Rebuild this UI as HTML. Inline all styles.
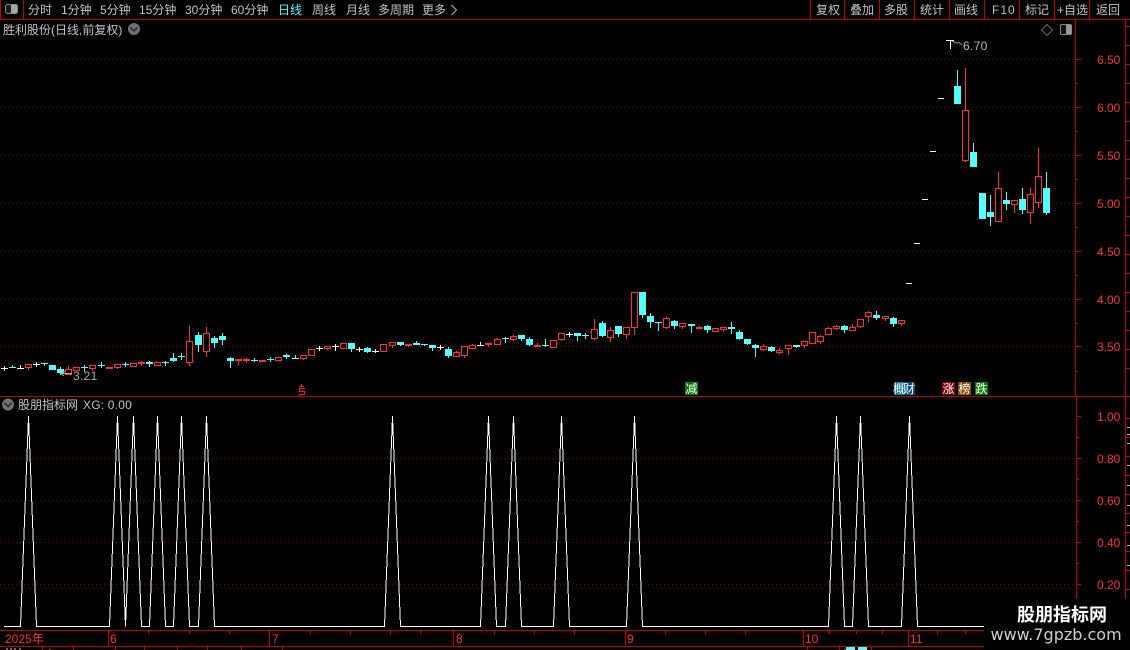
<!DOCTYPE html>
<html><head><meta charset="utf-8">
<style>
html,body{margin:0;padding:0;background:#000;width:1130px;height:650px;overflow:hidden}
svg{display:block}
text{font-family:"WenQuanYi Zen Hei","Liberation Sans","Noto Sans CJK SC",sans-serif;font-size:12px;fill:#c4c4c4}
.n{font-family:"Liberation Sans","WenQuanYi Zen Hei",sans-serif}
.r{fill:#ff3232;font-family:"Liberation Sans",sans-serif}
</style></head><body>
<svg width="1130" height="650" viewBox="0 0 1130 650" xmlns="http://www.w3.org/2000/svg">
<rect width="1130" height="650" fill="#000"/>

<!-- dotted grid -->
<path d="M0 59.5H1075M0 107.5H1075M0 155.5H1075M0 203.5H1075M0 251.5H1075M0 299.5H1075M0 346.5H1075M0 458.5H1075M0 500.5H1075M0 542.5H1075M0 584.5H1075" stroke="#6a0000" stroke-width="1" stroke-dasharray="1 3" fill="none"/>

<!-- frame -->
<path d="M0 19.5H1130M0 396.5H1130M0 630.5H984M0 646.5H984M0.5 0V19M23.5 0V19M810.5 0V19M844.5 0V19M879.5 0V19M914.5 0V19M949.5 0V19M984.5 0V19M1019.5 0V19M1054.5 0V19M1089.5 0V19M1075.5 19V397M1076.5 397V600M1125.5 19V600M108.5 631V646M269.5 631V646M453.5 631V646M625.5 631V646M803.5 631V646M908.5 631V646" stroke="#c00000" fill="none"/>
<!-- axis ticks -->
<path d="M1076 59.5H1081M1076 107.5H1081M1076 155.5H1081M1076 203.5H1081M1076 251.5H1081M1076 299.5H1081M1076 346.5H1081M1076 83.5H1078M1076 131.5H1078M1076 179.5H1078M1076 227.5H1078M1076 275.5H1078M1076 323.5H1078M1076 371.5H1078M1077 416.5H1081M1077 458.5H1081M1077 500.5H1081M1077 542.5H1081M1077 584.5H1081M1077 437.5H1079M1077 479.5H1079M1077 521.5H1079M1077 563.5H1079M1126 26.5H1130M1126 45.5H1130M1126 64.5H1130M1126 83.5H1130M1126 102.5H1130M1126 121.5H1130M1126 140.5H1130M1126 159.5H1130M1126 178.5H1130M1126 197.5H1130M1126 216.5H1130M1126 235.5H1130M1126 254.5H1130M1126 273.5H1130M1126 292.5H1130M1126 311.5H1130M1126 330.5H1130M1126 349.5H1130M1126 368.5H1130M1126 418.5H1130M1126 437.5H1130M1126 456.5H1130M1126 475.5H1130M1126 494.5H1130M1126 513.5H1130M1126 532.5H1130M1126 551.5H1130M1126 570.5H1130M1126 589.5H1130M148.5 631V634M189.5 631V634M229.5 631V634M310.5 631V634M350.5 631V634M390.5 631V634M420.5 631V634M494.5 631V634M534.5 631V634M574.5 631V634M665.5 631V634M705.5 631V634M745.5 631V634M829.5 631V634M856.5 631V634M882.5 631V634M937.5 631V634M965.5 631V634M42.5 647V650M73.5 647V650M115.5 647V650M144.5 647V650M177.5 647V650M207.5 647V650M241.5 647V650M282.5 647V650M807.5 647V650M839.5 647V650M871.5 647V650" stroke="#c00000" fill="none"/>
<path d="M1127 427.5H1130M1127 434.5H1130M1127 443.5H1130M1127 465.5H1130M1127 485.5H1130M1127 505.5H1130M1127 525.5H1130M1127 545.5H1130M1127 565.5H1130" stroke="#bbb" fill="none"/>
<path d="M7 648V650M11 648V650M15 648V650M20 648V650M50 649V650M845 649V650" stroke="#ccc" fill="none"/>
<path d="M846 648.5H855M858 648.5H867" stroke="#5ff" stroke-width="3" fill="none"/>

<!-- toolbar -->
<rect x="5.5" y="4.5" width="12" height="9" rx="2" fill="#1a1a1a" stroke="#8a8a8a"/>
<rect x="11" y="5" width="6" height="8" fill="#a8a8a8"/>
<text x="28" y="14">分时</text>
<text x="61" y="14">1分钟</text>
<text x="100" y="14">5分钟</text>
<text x="139" y="14">15分钟</text>
<text x="185" y="14">30分钟</text>
<text x="231" y="14">60分钟</text>
<text x="278" y="14" style="fill:#55ffff">日线</text>
<text x="312" y="14">周线</text>
<text x="346" y="14">月线</text>
<text x="378" y="14">多周期</text>
<text x="422" y="14">更多</text>
<path d="M451.5 5L456.5 10L451.5 15" stroke="#bbb" fill="none"/>
<text x="816" y="14">复权</text>
<text x="850" y="14">叠加</text>
<text x="884" y="14">多股</text>
<text x="920" y="14">统计</text>
<text x="954" y="14">画线</text>
<text x="992" y="14" class="n" letter-spacing="1">F10</text>
<text x="1025" y="14">标记</text>
<text x="1057" y="14">+自选</text>
<text x="1096" y="14">返回</text>

<!-- info row -->
<text x="3" y="34">胜利股份(日线,前复权)</text>
<circle cx="134" cy="29" r="6" fill="#707070"/>
<path d="M130.5 27.5L134 31L137.5 27.5" stroke="#1c1c1c" stroke-width="1.3" fill="none"/>
<path d="M1047 24.5L1052.5 30L1047 35.5L1041.5 30Z" stroke="#666" fill="none"/>
<rect x="1060.5" y="24.5" width="11" height="10" rx="1.5" fill="#111" stroke="#8a8a8a"/>
<rect x="1066" y="25" width="5" height="9" fill="#9a9a9a"/>

<!-- price labels -->
<g class="r">
<text class="r" x="1097" y="64">6.50</text>
<text class="r" x="1097" y="112">6.00</text>
<text class="r" x="1097" y="160">5.50</text>
<text class="r" x="1097" y="208">5.00</text>
<text class="r" x="1097" y="256">4.50</text>
<text class="r" x="1097" y="304">4.00</text>
<text class="r" x="1097" y="351">3.50</text>
<text class="r" x="1097" y="421">1.00</text>
<text class="r" x="1097" y="463">0.80</text>
<text class="r" x="1097" y="505">0.60</text>
<text class="r" x="1097" y="547">0.40</text>
<text class="r" x="1097" y="589">0.20</text>
<text class="r" x="5" y="643" style="font-family:'Liberation Sans','WenQuanYi Zen Hei',sans-serif">2025年</text>
<text class="r" x="110" y="643">6</text>
<text class="r" x="272" y="643">7</text>
<text class="r" x="456" y="643">8</text>
<text class="r" x="627" y="643">9</text>
<text class="r" x="805" y="643">10</text>
<text class="r" x="910" y="643">11</text>
</g>

<!-- white candles -->
<path shape-rendering="crispEdges" d="M1 368.5h7M4.5 366V371M17 368.5h7M20.5 365V369M33 364.5h7M36.5 362V367M316 348.5h7M319.5 346V351M332 346.5h7M335.5 344V351M356 349.5h7M359.5 347V352M372 351.5h7M375.5 349V353M437 347.5h7M440.5 345V350M477 345.5h7M480.5 342V346M566 334.5h7M569.5 332V337M906 283.5h6M914 243.5h6M922 199.5h6M930 151.5h6M938 98.5h6M946 40.5h8M950.5 40V49" stroke="#fff" fill="none"/>

<!-- cyan wicks / crosses -->
<path shape-rendering="crispEdges" d="M9 367.5h7M12.5 365V368M41 363.5h7M44.5 364V366M60.5 367V375M81 367.5h7M84.5 365V372M98 365.5h7M101.5 362V368M122 364.5h7M125.5 362V367M149.5 361V367M162 362.5h7M165.5 361V366M173.5 353V362M178 356.5h7M181.5 353V360M198.5 332V352M214.5 336V348M222.5 333V345M230.5 357V368M251 360.5h7M254.5 358V362M267 359.5h7M270.5 357V362M286.5 354V359M292 358.5h7M295.5 355V359M351.5 343V352M367.5 347V353M400.5 342V346M416.5 341V345M421 344.5h7M424.5 344V346M432.5 345V351M448.5 347V358M502 338.5h7M505.5 337V343M521.5 335V341M529.5 337V346M542 345.5h7M545.5 339V347M577.5 333V341M582 335.5h7M585.5 333V339M602.5 321V337M618.5 326V337M642.5 292V318M650.5 313V328M655 322.5h7M658.5 322V331M674.5 320V329M691.5 324V333M707.5 325V333M731.5 322V334M739.5 330V340M747.5 339V345M755.5 344V357M771.5 346V352M796.5 345V348M844.5 325V333M876.5 311V320M893.5 317V327M957.5 70V90M973.5 143V155M990.5 195V226M1006.5 192V210M1022.5 188V214M1046.5 172V215" stroke="#55ffff" fill="none"/>
<!-- cyan bodies -->
<path shape-rendering="crispEdges" fill="#55ffff" stroke="#55ffff" d="M49.5 365.5h6V369.5h-6zM57.5 369.5h6V372.5h-6zM146.5 362.5h6V363.5h-6zM170.5 358.5h6V360.5h-6zM195.5 335.5h6V344.5h-6zM211.5 338.5h6V342.5h-6zM219.5 336.5h6V339.5h-6zM227.5 358.5h6V360.5h-6zM283.5 355.5h6V356.5h-6zM348.5 343.5h6V348.5h-6zM364.5 348.5h6V351.5h-6zM397.5 342.5h6V344.5h-6zM413.5 343.5h6V344.5h-6zM429.5 345.5h6V347.5h-6zM445.5 349.5h6V355.5h-6zM518.5 335.5h6V338.5h-6zM526.5 339.5h6V344.5h-6zM574.5 333.5h6V335.5h-6zM599.5 323.5h6V335.5h-6zM615.5 326.5h6V333.5h-6zM639.5 292.5h6V314.5h-6zM647.5 316.5h6V321.5h-6zM671.5 321.5h6V325.5h-6zM688.5 324.5h6V325.5h-6zM704.5 326.5h6V329.5h-6zM728.5 327.5h6V328.5h-6zM736.5 332.5h6V338.5h-6zM744.5 339.5h6V343.5h-6zM752.5 345.5h6V347.5h-6zM768.5 347.5h6V350.5h-6zM793.5 345.5h6V346.5h-6zM841.5 326.5h6V329.5h-6zM873.5 315.5h6V317.5h-6zM890.5 318.5h6V323.5h-6zM954.5 86.5h6V103.5h-6zM970.5 152.5h6V166.5h-6zM979.5 193.5h6V218.5h-6zM987.5 212.5h6V216.5h-6zM1003.5 200.5h6V203.5h-6zM1019.5 199.5h6V209.5h-6zM1043.5 188.5h6V212.5h-6z"/>

<!-- red candles -->
<path shape-rendering="crispEdges" fill="none" stroke="#ff3232" d="M25.5 364.5h6V367.5h-6zM28.5 368V370M65.5 369.5h6V374.5h-6zM68.5 366V369M73.5 367.5h6V370.5h-6zM89.5 365.5h6V368.5h-6zM92.5 369V371M106.5 367.5h6V368.5h-6zM114.5 364.5h6V367.5h-6zM117.5 368V369M130.5 363.5h6V366.5h-6zM138.5 362.5h6V363.5h-6zM141.5 361V366M154.5 362.5h6V365.5h-6zM186.5 341.5h6V362.5h-6zM189.5 326V341M189.5 363V366M203.5 333.5h6V351.5h-6zM206.5 327V333M206.5 352V357M235.5 359.5h6V360.5h-6zM238.5 361V365M243.5 359.5h6V360.5h-6zM246.5 358V363M259.5 360.5h6V361.5h-6zM275.5 357.5h6V360.5h-6zM300.5 355.5h6V358.5h-6zM303.5 359V360M308.5 349.5h6V355.5h-6zM324.5 346.5h6V348.5h-6zM327.5 349V350M340.5 343.5h6V348.5h-6zM380.5 344.5h6V351.5h-6zM389.5 342.5h6V345.5h-6zM392.5 346V348M405.5 344.5h6V345.5h-6zM408.5 346V347M453.5 352.5h6V356.5h-6zM456.5 351V352M461.5 346.5h6V355.5h-6zM464.5 356V358M469.5 345.5h6V348.5h-6zM472.5 344V345M485.5 343.5h6V344.5h-6zM488.5 345V347M494.5 339.5h6V344.5h-6zM497.5 338V339M510.5 336.5h6V339.5h-6zM513.5 335V336M513.5 340V341M534.5 345.5h6V346.5h-6zM537.5 343V345M550.5 340.5h6V347.5h-6zM558.5 333.5h6V339.5h-6zM561.5 340V341M591.5 329.5h6V338.5h-6zM594.5 319V329M594.5 339V340M607.5 330.5h6V337.5h-6zM610.5 327V330M610.5 338V342M623.5 327.5h6V334.5h-6zM626.5 335V339M631.5 292.5h6V327.5h-6zM634.5 328V335M663.5 318.5h6V327.5h-6zM666.5 317V318M666.5 328V329M679.5 323.5h6V326.5h-6zM682.5 327V329M696.5 327.5h6V328.5h-6zM699.5 326V327M712.5 328.5h6V331.5h-6zM720.5 327.5h6V329.5h-6zM723.5 330V332M760.5 346.5h6V349.5h-6zM763.5 344V346M763.5 350V351M776.5 350.5h6V352.5h-6zM779.5 348V350M779.5 353V354M785.5 345.5h6V348.5h-6zM788.5 349V355M801.5 341.5h6V345.5h-6zM804.5 346V348M809.5 332.5h6V343.5h-6zM817.5 336.5h6V341.5h-6zM820.5 335V336M820.5 342V344M825.5 328.5h6V334.5h-6zM828.5 327V328M833.5 326.5h6V328.5h-6zM836.5 325V326M836.5 329V330M849.5 327.5h6V330.5h-6zM852.5 324V327M857.5 319.5h6V326.5h-6zM860.5 327V328M865.5 312.5h6V316.5h-6zM868.5 311V312M868.5 317V322M882.5 316.5h6V318.5h-6zM885.5 319V321M898.5 320.5h6V323.5h-6zM901.5 324V326M962.5 110.5h6V160.5h-6zM965.5 68V110M965.5 161V162M995.5 188.5h6V221.5h-6zM998.5 172V188M1011.5 200.5h6V204.5h-6zM1014.5 205V213M1027.5 194.5h6V212.5h-6zM1030.5 188V194M1030.5 213V224M1035.5 176.5h6V202.5h-6zM1038.5 148V176M1038.5 203V208"/>

<!-- annotations -->
<path d="M952 41L956 43L959 42.5L962 45" stroke="#999" fill="none"/>
<text class="n" x="963" y="50" style="fill:#bbb" letter-spacing=".3">6.70</text>
<path d="M72 373.5H62M65 371L61 373.5L64 376" stroke="#aaa" fill="none"/>
<text class="n" x="73" y="380" style="fill:#aaa" letter-spacing=".3">3.21</text>

<path shape-rendering="crispEdges" d="M301.5 384V387M299 386.500H304M305 388.500H299.500V391.500H304.500V394.500H298.500" stroke="#ee2222" fill="none"/>

<rect x="685" y="382" width="13" height="13" fill="#007a00"/>
<text x="685.5" y="393" style="fill:#fff">减</text>
<rect x="894" y="382" width="10" height="13" fill="#007a8c"/>
<rect x="904" y="382" width="11" height="13" fill="#0a4a7c"/>
<text x="893" y="393" style="fill:#fff">概</text>
<text x="903" y="393" style="fill:#fff">财</text>
<rect x="942" y="382" width="13" height="13" fill="#7d0000"/>
<text x="942.5" y="393" style="fill:#fff">涨</text>
<rect x="958" y="382" width="13" height="13" fill="#8a4a00"/>
<text x="958.5" y="393" style="fill:#fff">榜</text>
<rect x="975" y="382" width="13" height="13" fill="#007a00"/>
<text x="975.5" y="393" style="fill:#fff">跌</text>

<!-- lower panel -->
<circle cx="8" cy="404.500" r="6" fill="#707070"/>
<path d="M4.500 403L8 406.500L11.500 403" stroke="#1c1c1c" stroke-width="1.300" fill="none"/>
<text x="18" y="409">股朋指标网</text>
<text class="n" x="83" y="409" letter-spacing=".2">XG: 0.00</text>

<path shape-rendering="crispEdges" fill="none" stroke="#fff" d="M4 626.500H20.500L28.500 416L36.500 626.500H109.500L117.500 416L125.500 626.500L133.500 416L141.500 626.500H149.500L157.500 416L165.500 626.500H173.500L181.500 416L189.500 626.500H198.500L206.500 416L214.500 626.500H384.500L392.500 416L400.500 626.500H480.500L488.500 416L496.500 626.500H505.500L513.500 416L521.500 626.500H553.500L561.500 416L569.500 626.500H626.500L634.500 416L642.500 626.500H828.500L836.500 416L844.500 626.500H852.500L860.500 416L868.500 626.500H901.500L909.500 416L917.500 626.500H984"/>

<!-- watermark -->
<rect x="984" y="599" width="146" height="51" fill="#000"/>
<text x="1017" y="621" style="font-family:'Noto Sans CJK SC','WenQuanYi Zen Hei',sans-serif;font-size:18px;font-weight:700;fill:#fff">股朋指标网</text>
<text x="990.500" y="640" style="font-family:'DejaVu Sans',sans-serif;font-size:16px;fill:#cfcfcf">www.7gpzb.com</text>
</svg>
</body></html>
